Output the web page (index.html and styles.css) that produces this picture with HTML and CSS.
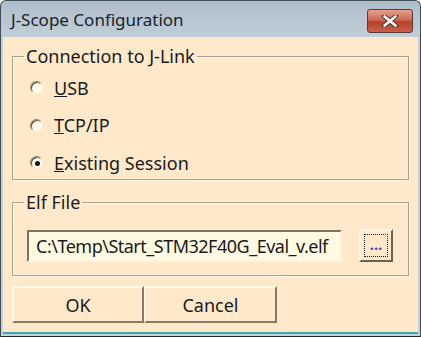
FILE: index.html
```html
<!DOCTYPE html>
<html>
<head>
<meta charset="utf-8">
<link rel="stylesheet" href="styles.css">
</head>
<body>
<div class="window">
  <div class="titlebar">
    <span class="title">J-Scope Configuration</span>
    <span class="close"><svg width="18" height="12" viewBox="0 0 18 12"><path d="M3 1 L15 11 M15 1 L3 11" stroke="#4a3a36" stroke-width="4.5" stroke-linecap="round"/><path d="M3.5 1.5 L14.5 10.5 M14.5 1.5 L3.5 10.5" stroke="#ffffff" stroke-width="2.6" stroke-linecap="round"/></svg></span>
  </div>
  <div class="client">
    <fieldset class="group group-conn">
      <legend>Connection to J-Link</legend>
      <label class="radio"><span class="dot"></span><span><u>U</u>SB</span></label>
      <label class="radio"><span class="dot"></span><span><u>T</u>CP/IP</span></label>
      <label class="radio"><span class="dot checked"></span><span><u>E</u>xisting Session</span></label>
    </fieldset>
    <fieldset class="group group-elf">
      <legend>Elf File</legend>
      <div class="elf-row">
        <div class="field">C:\Temp\Start_STM32F40G_Eval_v.elf</div>
        <div class="browse"><span class="focus">...</span></div>
      </div>
    </fieldset>
    <div class="buttons">
      <div class="btn">OK</div>
      <div class="btn">Cancel</div>
    </div>
  </div>
</div>
</body>
</html>
```
FILE: styles.css
```css
html, body {
  margin: 0;
  padding: 0;
  background: #ffffff;
}
body {
  font-family: "Noto Sans", "Open Sans", sans-serif;
  font-size: 18px;
  color: #1a1a1a;
}
.window {
  width: 421px;
  height: 337px;
  box-sizing: border-box;
  border: 1px solid #3f4d58;
  border-bottom-color: #1e2a30;
  border-radius: 6px 6px 0 0;
  background: linear-gradient(#aebdca, #c3d0da 40px, #c3d0da);
  padding: 0 2px 2px 2px;
  display: flex;
  flex-direction: column;
}
.titlebar {
  height: 36px;
  display: flex;
  align-items: center;
  justify-content: space-between;
  padding: 0 5px 0 8px;
}
.title {
  font-family: "Noto Sans", sans-serif;
  font-size: 17px;
  color: #17222c;
  padding-top: 1px;
}
.close {
  width: 44px;
  height: 22px;
  border: 1px solid #5b3a33;
  border-radius: 3px;
  background: linear-gradient(#e4a08c, #cf6a52 45%, #b8412a 55%, #c9604a);
  display: flex;
  align-items: center;
  justify-content: center;
  margin-top: 4px;
}
.client {
  flex: 1;
  background: #ffe9ca;
  border-bottom: 2px solid #3aa7ad;
  padding: 10px 9px 0 9px;
  display: flex;
  flex-direction: column;
}
.group {
  margin: 0;
  border: 1px solid #aba28d;
  box-shadow: 1px 1px 0 #fff8ea, inset 1px 1px 0 #fff8ea;
  padding: 0;
  min-width: 0;
}
.group legend {
  margin-left: 11px;
  padding: 0 2px;
  line-height: 19px;
  color: #1a1a1a;
}
.group-conn {
  height: 133px;
  box-sizing: border-box;
  padding-top: 3px;
  display: flex;
  flex-direction: column;
}
.radio {
  display: flex;
  align-items: center;
  gap: 11px;
  height: 37.5px;
  margin-left: 17px;
}
.dot {
  width: 11px;
  height: 11px;
  border-radius: 50%;
  border: 1px solid;
  border-color: #8b8470 #f5efe0 #f5efe0 #8b8470;
  background: #fffbea;
  box-shadow: inset 1px 1px 0 #5d584c;
  position: relative;
}
.dot.checked::after {
  content: "";
  position: absolute;
  left: 3.5px;
  top: 3.5px;
  width: 5px;
  height: 5px;
  border-radius: 50%;
  background: #111;
}
.group-elf {
  margin-top: 13px;
  height: 83px;
  box-sizing: border-box;
  padding-top: 17px;
}
.elf-row {
  display: flex;
  align-items: center;
  gap: 17px;
  margin-left: 14px;
}
.field {
  width: 315px;
  height: 32px;
  box-sizing: border-box;
  border: 2px solid;
  border-color: #7d7563 #fff4e0 #fff4e0 #7d7563;
  background: #fffbe3;
  padding-left: 7px;
  line-height: 29px;
  white-space: nowrap;
  letter-spacing: -0.5px;
}
.browse {
  width: 34px;
  height: 33px;
  box-sizing: border-box;
  border: 2px solid;
  border-color: #fff8e6 #6b6354 #6b6354 #fff8e6;
  background: #ffe9ca;
  display: flex;
  align-items: center;
  justify-content: center;
}
.focus {
  width: 24px;
  height: 23px;
  box-sizing: border-box;
  border: 1px dotted #222;
  color: #4a4ab8;
  font-size: 15px;
  font-weight: bold;
  line-height: 19px;
  text-align: center;
}
.buttons {
  display: flex;
  margin-top: 10px;
}
.btn {
  width: 132px;
  height: 37px;
  box-sizing: border-box;
  border: 2px solid;
  border-color: #fff8e6 #857a66 #857a66 #fff8e6;
  display: flex;
  align-items: center;
  justify-content: center;
}
.btn + .btn {
  width: 133px;
}
```
